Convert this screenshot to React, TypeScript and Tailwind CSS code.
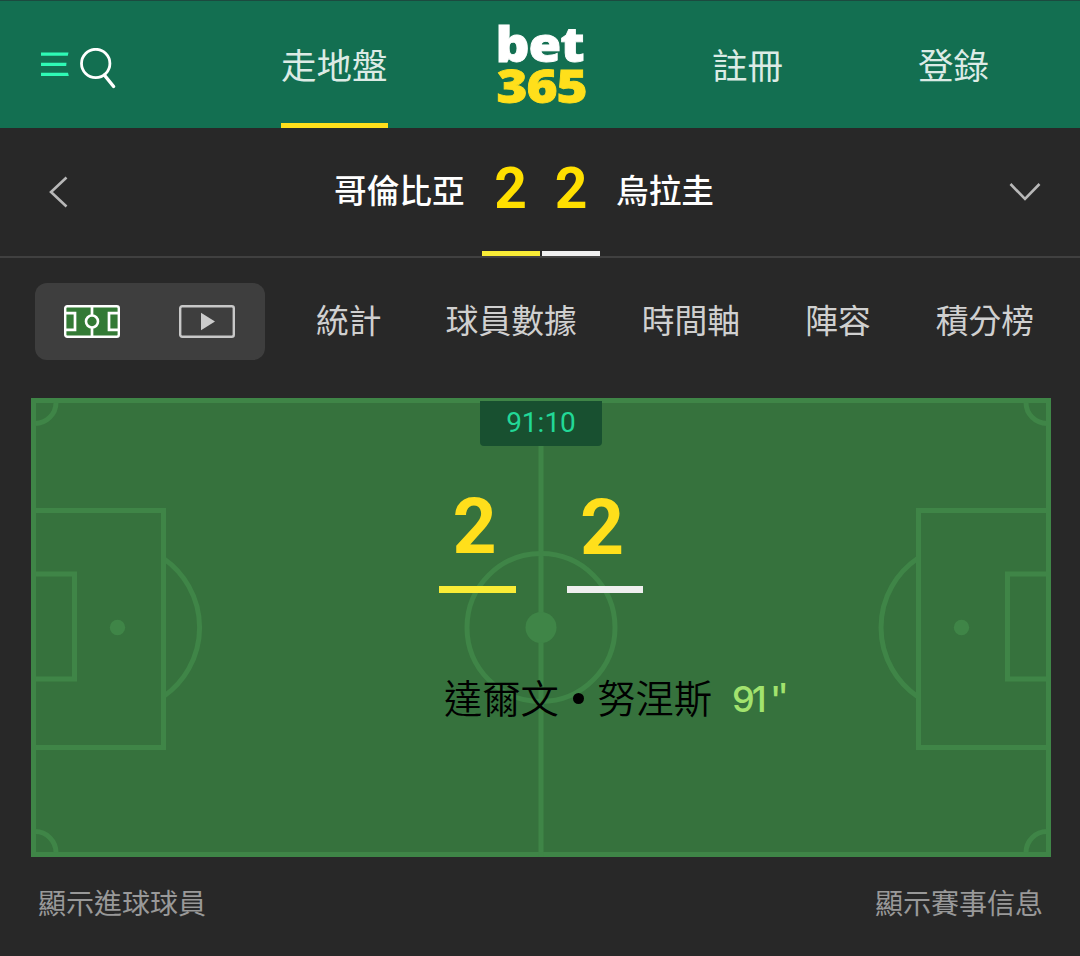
import type { ReactNode } from 'react';

const tabs = [
  { label: '統計', className: 'ml-[51px]' },
  { label: '球員數據', className: 'ml-16' },
  { label: '時間軸', className: 'ml-[65px]' },
  { label: '陣容', className: 'ml-[65px]' },
  { label: '積分榜', className: 'ml-[65px]' },
];

function MenuIcon() {
  return (
    <svg width="28" height="26" viewBox="0 0 28 26" fill="#2ffab5">
      <path d="M0 .5h27.5l-.7 3.3H0zM0 10.7h25.5l-.3 3.3H0zM0 20.8h27l.8 3.3H0z" />
    </svg>
  );
}

function SearchIcon() {
  return (
    <svg width="37" height="41" viewBox="0 0 37 41" fill="none" stroke="#fff">
      <circle cx="15.7" cy="15.5" r="14.2" strokeWidth="2.8" />
      <path d="M24.3 27 33.6 38.5" strokeWidth="3.4" strokeLinecap="round" />
    </svg>
  );
}

function Logo() {
  return (
    <svg
      width="92"
      height="84"
      viewBox="0 0 92 84"
      className="overflow-visible font-['Noto_Sans',sans-serif] font-black tracking-[-1px]"
    >
      <text x="-1.5" y="39" fontSize="47.5" fill="#fff" stroke="#fff" strokeWidth=".8" textLength="88" lengthAdjust="spacingAndGlyphs">
        bet
      </text>
      <text x="-.5" y="79.5" fontSize="46" fill="#ffdf1b" stroke="#ffdf1b" strokeWidth=".8" textLength="90" lengthAdjust="spacingAndGlyphs">
        365
      </text>
    </svg>
  );
}

function PitchIcon() {
  return (
    <svg width="56" height="33" viewBox="0 0 56 33" fill="none" stroke="#fff">
      <rect x="1.2" y="1.2" width="53.6" height="30.6" rx="2" fill="#337a35" strokeWidth="2.4" />
      <path d="M2 8.2h9v16.6H2M54 8.2h-9v16.6h9M28 2v8.5M28 22.5V31" strokeWidth="2.7" />
      <circle cx="28" cy="16.5" r="6" strokeWidth="2.6" />
    </svg>
  );
}

function VideoIcon() {
  return (
    <svg width="56" height="33" viewBox="0 0 56 33" fill="none">
      <rect x="1.2" y="1.2" width="53.6" height="30.6" rx="2" stroke="#c8c8c8" strokeWidth="2.4" />
      <path d="M22 7.8 36 16.5 22 25.2z" fill="#ccc" />
    </svg>
  );
}

function PitchLines() {
  return (
    <svg
      className="absolute inset-0"
      width="1020"
      height="459"
      viewBox="0 0 1020 459"
      fill="none"
      stroke="#3f8547"
      strokeWidth="5"
    >
      <rect x="2.5" y="2.5" width="1015" height="454" />
      <path d="M510 0v459" />
      <circle cx="510" cy="229.5" r="74" />
      <circle cx="510" cy="229.5" r="15.5" fill="#3f8547" stroke="none" />
      {/* left end */}
      <path d="M5 112.5h127.5v237H5M5 176h38.5v105H5M132.5 160.5a84 84 0 0 1 0 138" />
      <circle cx="86.5" cy="229.5" r="7.7" fill="#3f8547" stroke="none" />
      {/* right end */}
      <path d="M1015 112.5H887.5v237H1015M1015 176h-38.5v105h38.5M886.5 160.5a83.5 83.5 0 0 0 0 138" />
      <circle cx="930.5" cy="229.5" r="7.7" fill="#3f8547" stroke="none" />
      {/* corners */}
      <path d="M4 25.5a21 21 0 0 0 21-21M4 433.5a21 21 0 0 1 21 21M1016 25.5a21 21 0 0 1-21-21M1016 433.5a21 21 0 0 0-21 21" />
    </svg>
  );
}

function NavItem({ className, children }: { className: string; children: ReactNode }) {
  return (
    <a className={`flex h-[127px] shrink-0 items-center whitespace-nowrap border-b-[5px] pt-[3px] text-[35.5px] leading-none text-[#dcebe5] ${className}`}>
      {children}
    </a>
  );
}

function Header() {
  return (
    <header className="flex h-32 items-start border-t border-[#1c4a3f] bg-[#136f51]">
      <div className="ml-[41px] mt-[47px] flex w-[240px] gap-[11px]">
        <div className="pt-1">
          <MenuIcon />
        </div>
        <SearchIcon />
      </div>
      <NavItem className="w-[107px] border-[#ffdf1b]">走地盤</NavItem>
      <div className="ml-[109px] mt-[22px] w-[91px]">
        <Logo />
      </div>
      <NavItem className="ml-[124px] w-[72px] border-transparent">註冊</NavItem>
      <NavItem className="ml-[134px] w-[72px] border-transparent">登錄</NavItem>
    </header>
  );
}

function ScoreBar() {
  return (
    <section className="flex h-[130px] items-center border-b-2 border-[#404040] text-[32.7px] font-medium leading-none text-white">
      <svg className="ml-[47px]" width="22" height="34" viewBox="0 0 22 34" fill="none" stroke="#b8b8b8" strokeWidth="2.6">
        <path d="M19.5 2.5 4 17l15.5 14.5" />
      </svg>
      <span className="ml-[265px] w-[132px] whitespace-nowrap pb-[5px]">哥倫比亞</span>
      <div className="ml-4 flex h-full gap-0.5 text-center font-['Roboto',sans-serif] text-[57px] font-bold text-[#ffdf00]">
        <span className="w-[58px] border-b-[5px] border-[#f9ec36] pr-px pt-[32px]">2</span>
        <span className="w-[58px] border-b-[5px] border-[#efefef] pt-[32px]">2</span>
      </div>
      <span className="ml-4 w-[98px] whitespace-nowrap pb-[5px]">烏拉圭</span>
      <svg className="ml-auto mr-[38px]" width="34" height="22" viewBox="0 0 34 22" fill="none" stroke="#b8b8b8" strokeWidth="2.6">
        <path d="M2.5 3 17 18 31.5 3" />
      </svg>
    </section>
  );
}

function Tabs() {
  return (
    <nav className="mt-[25px] flex items-center pl-[35px] text-[32.8px] leading-none text-[#d0d0d0]">
      <div className="flex h-[77px] w-[230px] items-center gap-[59px] rounded-xl bg-[#3e3e3e] pl-[29px]">
        <PitchIcon />
        <VideoIcon />
      </div>
      {tabs.map((tab) => (
        <a key={tab.label} className={`whitespace-nowrap pb-1 ${tab.className}`}>
          {tab.label}
        </a>
      ))}
    </nav>
  );
}

function Pitch() {
  return (
    <section className="relative ml-[31px] mt-[38px] h-[459px] w-[1020px] bg-[#36723d]">
      <PitchLines />
      <div className="relative flex flex-col pt-[3px]">
        <div className="ml-[449px] h-[45px] w-[122px] rounded-b-sm bg-[#185030] pt-2 text-center font-['Roboto',sans-serif] text-[28px] leading-none text-[#22d897]">
          91:10
        </div>
        <div className="ml-[408px] mt-[41px] flex gap-[51px] text-center font-['Roboto',sans-serif] text-[77px] font-bold leading-none text-[#ffdf1b]">
          <span className="h-[106px] w-[77px] border-b-[7px] border-[#f9ec36] pr-[6px] pt-0.5">2</span>
          <span className="h-[106px] w-[76px] border-b-[7px] border-[#efefef] pr-[6px] pt-[3px]">2</span>
        </div>
        <div className="ml-[413px] mt-[85px] flex items-center whitespace-nowrap leading-none">
          <span className="flex items-center text-[38.3px] font-[350] text-black">
            達爾文
            <span className="flex w-[38.3px] justify-center">
              <span className="mt-0.5 size-[11px] rounded-full bg-black" />
            </span>
            努涅斯
          </span>
          <span className="ml-5 flex pt-[3px] font-['Inter',sans-serif] text-[36px] font-medium text-[#a2e36e]">
            <span className="w-[38px] tracking-[-3px]">91</span>
            <span>'</span>
            <span className="-ml-1 -mt-[3px]">'</span>
          </span>
        </div>
      </div>
    </section>
  );
}

export default function App() {
  return (
    <main className="h-[956px] w-[1080px] overflow-hidden bg-[#282828] font-['Noto_Sans_CJK_TC',sans-serif]">
      <Header />
      <ScoreBar />
      <Tabs />
      <Pitch />
      <footer className="mt-[31px] flex justify-between pl-[38px] pr-[37px] text-[28px] leading-none text-[#999]">
        <span>顯示進球球員</span>
        <span>顯示賽事信息</span>
      </footer>
    </main>
  );
}
